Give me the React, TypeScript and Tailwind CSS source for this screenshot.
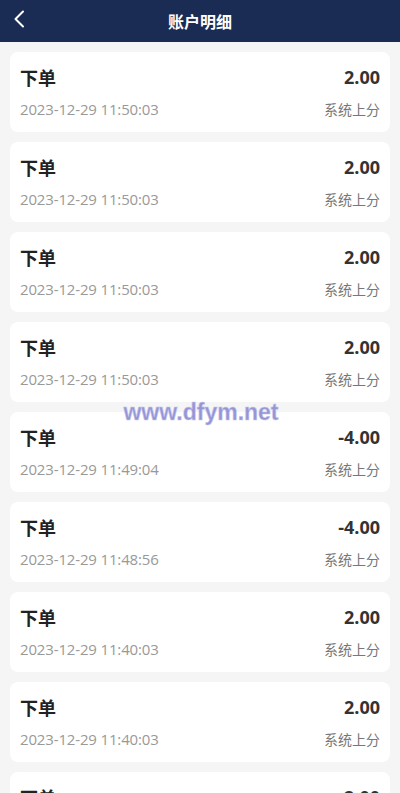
import React from "react";

const rows = [
  { amt: "2.00", time: "2023-12-29 11:50:03" },
  { amt: "2.00", time: "2023-12-29 11:50:03" },
  { amt: "2.00", time: "2023-12-29 11:50:03" },
  { amt: "2.00", time: "2023-12-29 11:50:03" },
  { amt: "-4.00", time: "2023-12-29 11:49:04" },
  { amt: "-4.00", time: "2023-12-29 11:48:56" },
  { amt: "2.00", time: "2023-12-29 11:40:03" },
  { amt: "2.00", time: "2023-12-29 11:40:03" },
  { amt: "2.00", time: "2023-12-29 11:40:03" },
];

export default function App() {
  return (
    <div
      className="relative h-[793px] w-[400px] bg-[#f5f5f5] overflow-hidden"
      style={{ fontFamily: '"Microsoft YaHei", "Noto Sans CJK SC", sans-serif' }}
    >
      <div className="relative flex h-[42px] items-center justify-center bg-[#1a2c54]">
        <svg className="absolute left-[13px] top-[10px]" width="12" height="18" viewBox="0 0 12 18" fill="none">
          <path d="M10 1.5 L2.5 9 L10 16.5" stroke="#ffffff" strokeWidth="2" strokeLinecap="round" strokeLinejoin="round" />
        </svg>
        <span className="text-[16px] font-bold text-white">账户明细</span>
      </div>
      <div className="flex flex-col gap-[10px] px-[10px] pt-[10px]">
        {rows.map((r, i) => (
          <div key={i} className="flex h-[80px] shrink-0 flex-col justify-center rounded-[8px] bg-white px-[10px]">
            <div className="flex items-center justify-between">
              <span className="text-[18px] font-bold text-[#222]">下单</span>
              <span
                className="text-[18px] font-bold text-[#333]"
                style={{ fontFamily: '"Open Sans", "Noto Sans", sans-serif' }}
              >
                {r.amt}
              </span>
            </div>
            <div className="mt-[7px] flex items-center justify-between">
              <span
                className="text-[15px] text-[#999] tracking-[-0.15px]"
                style={{ fontFamily: '"Open Sans", "Noto Sans", sans-serif' }}
              >
                {r.time}
              </span>
              <span className="text-[14px] text-[#777]">系统上分</span>
            </div>
          </div>
        ))}
      </div>
      <div
        className="pointer-events-none absolute left-0 right-0 top-[395px] pl-[2px] text-center text-[23px] font-bold text-[#9595d6]"
        style={{ fontFamily: '"Liberation Sans", Arial, sans-serif', WebkitTextStroke: "0.5px #c8c8ee" }}
      >
        www.dfym.net
      </div>
    </div>
  );
}
